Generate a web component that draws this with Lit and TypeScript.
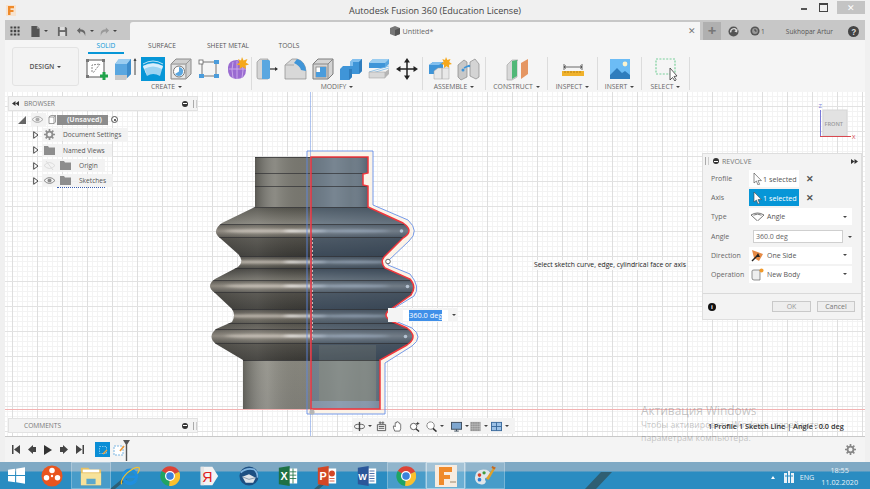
import { LitElement, html, css, svg } from "lit";
import { customElement } from "lit/decorators.js";

const ico = (body: unknown, size = 24) =>
  html`<svg width=${size} height=${size} viewBox="0 0 24 24">${body}</svg>`;

const caret = html`<span class="caret"></span>`;

// toolbar icons, all on a 24 box
const tb: Record<string, unknown> = {
  sketch: svg`<rect x="2" y="3" width="17" height="17" fill="#fff" stroke="#555" stroke-width="1"/>
    <path d="M7 15 L7 8 L15 7 L8 16" fill="none" stroke="#888" stroke-dasharray="2 1"/>
    <rect x="1" y="2" width="3" height="3" fill="#777"/><rect x="17" y="2" width="3" height="3" fill="#777"/><rect x="1" y="18" width="3" height="3" fill="#777"/>
    <path d="M15 19h8M19 15v8" stroke="#1fa34a" stroke-width="3"/>`,
  extrude: svg`<path d="M2 7 L6 2 L18 2 L18 17 L14 21 L2 21Z" fill="#5aa7e0"/>
    <path d="M2 7 L6 2 L18 2 L14 7Z" fill="#9bcdf0"/><path d="M14 7 L18 2 L18 17 L14 21Z" fill="#3d8ccb"/>
    <path d="M2 18h12v3l-1 2H2Z" fill="#c9c9c9"/><path d="M22 2v16" stroke="#444"/><path d="M20.5 4 L22 1 L23.5 4Z" fill="#444"/>`,
  revolve: svg`<rect width="24" height="24" fill="#0696d7"/>
    <path d="M2 9 Q12 3 22 9 L19 19 Q12 15 6 19Z" fill="#9bd3f2"/><path d="M2 9 Q12 4 22 9 L21 12 Q12 7 3 12Z" fill="#d9eefb"/>
    <path d="M2 9 L6 19 L5 15Z" fill="#eee"/><path d="M2 7 Q12 1 22 7" fill="none" stroke="#e6f5fd" stroke-width=".8"/>`,
  hole: svg`<path d="M2 7 L7 2 L22 2 L22 17 L17 22 L2 22Z" fill="#cfcfcf" stroke="#8c8c8c"/>
    <path d="M17 22V7L22 2M17 7H2" fill="none" stroke="#999"/><rect x="3" y="8" width="13" height="13" fill="#e6e6e6"/>
    <circle cx="10" cy="14.5" r="5.5" fill="#fff" stroke="#777"/><path d="M10 14.5V10A4.5 4.5 0 1 1 6 17Z" fill="#5aa7e0"/>`,
  box: svg`<path d="M5 5H19M5 5V19M19 5V19M5 19H19" stroke="#555" stroke-width=".8"/>
    <rect x="2" y="3" width="4" height="4" fill="#fff" stroke="#666" stroke-width=".8"/><rect x="17" y="3" width="5" height="4" fill="#4a9cdc"/>
    <rect x="2" y="17" width="5" height="4" fill="#4a9cdc"/><rect x="17" y="17" width="5" height="4" fill="#4a9cdc"/>`,
  form: svg`<path d="M3 10 Q4 3 12 3 Q21 4 21 13 Q21 22 11 22 Q2 21 3 10Z" fill="#9a6bd1"/>
    <path d="M4 12H21M12 4V22M8 5Q6 13 8 21M17 5Q19 13 17 21" fill="none" stroke="#c9a9ea" stroke-width="1"/>
    <path d="M17 0 L18.5 3.5 L22.5 2 L20.8 5.5 L24 7.5 L20.5 8.5 L21 12 L17.5 10 L14.5 12 L15 8.5 L11.5 7.5 L14.5 5.5 L13 2 L16 3.5Z" fill="#f5a81c"/>`,
  press: svg`<path d="M2 5 L5 2 H13 V22 H4 Q2 22 2 20Z" fill="#d5d5d5" stroke="#888" stroke-width=".6"/>
    <path d="M7 3 H14 L15 4 V21 L14 22 H7Z" fill="#5aa7e0"/><path d="M15 12H22" stroke="#333" stroke-width="1.2"/><path d="M20 10 L23 12 L20 14Z" fill="#333"/>`,
  fillet: svg`<path d="M2 22 V8 L9 2 H14 Q22 4 23 14 V22Z" fill="#d8d8d8" stroke="#8a8a8a" stroke-width=".7"/>
    <path d="M14 2 Q22 4 23 14 L18 13 Q17 9 11 6Z" fill="#3f95d8"/><path d="M2 8 H11" stroke="#aaa"/>`,
  shell: svg`<path d="M2 7 L7 2 H22 V17 L17 22 H2Z" fill="#d4d4d4" stroke="#7c7c7c"/>
    <path d="M17 22V7L22 2M17 7H2" fill="none" stroke="#888"/><rect x="5" y="10" width="10" height="10" fill="#fff" stroke="#777" stroke-width=".7"/>
    <path d="M9 10H15V20H5V15H9Z" fill="#4a9cdc"/>`,
  combine: svg`<path d="M1 12 L4 9 H11 V5 L14 2 H23 V14 L20 17 H13 V20 L10 23 H1Z" fill="#3f95d8"/>
    <path d="M11 9V5L14 2H23L20 5H14V9Z" fill="#82bfee"/><path d="M20 5V17L23 14V2Z" fill="#2f7dbd"/><path d="M10 23V12H13V20Z" fill="#2f7dbd"/>`,
  offset: svg`<path d="M2 6 L6 2 H22 V7 L18 11 H2Z" fill="#5aa7e0"/><path d="M2 6H18V11H2Z" fill="#3f95d8"/><path d="M2 6 L6 2 H22 L18 6Z" fill="#9bcdf0"/>
    <path d="M2 15 L22 9 M2 17 L22 11" stroke="#7fbbe8" stroke-width=".8"/><path d="M2 15H18V21L2 21Z" fill="#d8d8d8" stroke="#999" stroke-width=".5"/><path d="M18 15 L22 12 V17 L18 21Z" fill="#b5b5b5"/>`,
  move: svg`<path d="M12 3V21M3 12H21" stroke="#222" stroke-width="1.5"/><path d="M12 1 L15 5.5 H9Z M12 23 L15 18.5 H9Z M1 12 L5.5 9 V15Z M23 12 L18.5 9 V15Z" fill="#222"/>`,
  comp: svg`<path d="M1 8 L5 5 H15 V17 H1Z" fill="#3f95d8"/><path d="M1 8 L5 5 H15 L11 8Z" fill="#82bfee"/><path d="M6 14 L10 11 H21 V22 H6Z" fill="#e8e8e8" stroke="#a0a0a0" stroke-width=".5"/><path d="M14 11V22" stroke="#aaa"/>
    <path d="M18 0 L19.3 3 L22.5 2 L21.2 5 L24 7 L21 7.8 L21.3 11 L18.5 9.2 L16 11 L16 7.8 L13 7 L15.6 5 L14.3 2 L17 3Z" fill="#f5a81c"/>`,
  joint: svg`<path d="M2 8 L8 3 L11 5 V20 L5 23 L2 20Z" fill="#c8c8c8" stroke="#888" stroke-width=".7"/><path d="M14 5 L19 2 L23 7 V20 L20 22 L14 19Z" fill="#d4d4d4" stroke="#888" stroke-width=".7"/>
    <path d="M8 11 L12 9" stroke="#3f95d8" stroke-width="1.5"/><circle cx="7" cy="13" r="1.5" fill="#3f95d8"/><circle cx="13" cy="9" r="1.2" fill="#3f95d8"/>`,
  plane: svg`<path d="M2 8 L7 3 H13 L12 4 V20 L7 23 H2Z" fill="#d9d9d9" stroke="#9a9a9a" stroke-width=".6"/><path d="M7 4 L12 3 V19 L7 22Z" fill="#52b878"/>
    <path d="M16 6 L23 2 V17 L16 22Z" fill="#e59662"/>`,
  inspect: svg`<path d="M3 10H21" stroke="#444" stroke-width=".8"/><path d="M3 7V13M21 7V13" stroke="#444" stroke-width=".8"/><path d="M5 8.5L3 10L5 11.5M19 8.5L21 10L19 11.5" stroke="#444" stroke-width=".8" fill="none"/>
    <rect x="1" y="14" width="22" height="5" fill="#f0b22c"/><path d="M4 14v2M7 14v2M10 14v2M13 14v2M16 14v2M19 14v2" stroke="#a36c00" stroke-width=".7"/>`,
  insert: svg`<rect x="2" y="2" width="20" height="20" fill="#6cbcf5"/><circle cx="17" cy="7" r="2.4" fill="#fbf3cf"/>
    <path d="M2 18 L9 11 L14 16 L17 14 L22 18 V22 H2Z" fill="#2f7dbd"/>`,
  select: svg`<rect x="2" y="2" width="19" height="15" fill="none" stroke="#7bd09c" stroke-width="1.2" stroke-dasharray="2 1.4"/>
    <path d="M16 11 V23 L18.5 20.5 L21 24 L22 22.5 L20 19.5 L23 19Z" fill="#fff" stroke="#333" stroke-width=".8"/>`,
};

const tabs = [
  { label: "SOLID", w: 36, on: true },
  { label: "SURFACE", w: 76 },
  { label: "SHEET METAL", w: 56 },
  { label: "TOOLS", w: 66 },
];

const groups = [
  { label: "CREATE", w: 164, pad: true, icons: ["sketch", "extrude", "revolve", "hole", "box", "form"] },
  { label: "MODIFY", w: 171, icons: ["press", "fillet", "shell", "combine", "offset", "move"] },
  { label: "ASSEMBLE", w: 63, icons: ["comp", "joint"] },
  { label: "CONSTRUCT", w: 62, icons: ["plane"] },
  { label: "INSPECT", w: 50, icons: ["inspect"] },
  { label: "INSERT", w: 44, icons: ["insert"] },
  { label: "SELECT", w: 48, icons: ["select"] },
];

const eye = (c = "#8b8b8b") => html`<svg class="tree-ic" width="11" height="9" viewBox="0 0 11 9">
  <path d="M0 4.5 Q5.5 -1.5 11 4.5 Q5.5 10.5 0 4.5Z" fill="none" stroke=${c}/><circle cx="5.5" cy="4.5" r="2" fill=${c}/></svg>`;
const eyeOff = html`<svg class="tree-ic" width="11" height="9" viewBox="0 0 11 9">
  <path d="M0 4.5 Q5.5 -1.5 11 4.5 Q5.5 10.5 0 4.5Z" fill="none" stroke="#dcdcdc"/><path d="M2 0 L9 9" stroke="#dcdcdc"/></svg>`;
const folder = html`<svg class="tree-ic" width="11" height="9" viewBox="0 0 11 9"><path d="M0 0H4L5 1.5H11V9H0Z" fill="#8d8d8d"/></svg>`;
const gear = (size = 11, c = "#8d8d8d") => html`<svg class="tree-ic" width=${size} height=${size} viewBox="0 0 12 12">
  <circle cx="6" cy="6" r="3.2" fill="none" stroke=${c} stroke-width="2"/>
  <path d="M6 0V2.4M6 9.6V12M0 6H2.4M9.6 6H12M1.8 1.8L3.4 3.4M8.6 8.6L10.2 10.2M1.8 10.2L3.4 8.6M8.6 3.4L10.2 1.8" stroke=${c} stroke-width="1.8"/></svg>`;

const treeRows = [
  { label: "Document Settings", deep: false, icon: gear() },
  { label: "Named Views", deep: false, icon: folder },
  { label: "Origin", deep: true, eye: eyeOff, icon: folder },
  { label: "Sketches", deep: true, eye: eye(), icon: folder, warn: true },
];

const cursorIc = (c: string) => html`<svg width="9" height="12" viewBox="0 0 9 12"><path d="M1 0V10L3.4 8L5 12L6.6 11.3L5 7.6H8.4Z" fill=${c} stroke="#444" stroke-width=".6"/></svg>`;

const revolveRows = [
  { label: "Profile", value: "1 selected", kind: "sel", icon: cursorIc("#fff") },
  { label: "Axis", value: "1 selected", kind: "sel on", icon: cursorIc("#fff") },
  { label: "Type", value: "Angle", kind: "drop", icon: html`<svg width="13" height="9" viewBox="0 0 13 9"><path d="M0 3 Q6.5 -1 13 3 L6.5 9Z M2.5 3.2 Q6.5 1 10.5 3.2" fill="#fff" stroke="#555" stroke-width=".8"/></svg>` },
  { label: "Angle", value: "360.0 deg", kind: "num" },
  { label: "Direction", value: "One Side", kind: "drop", icon: html`<svg width="13" height="13" viewBox="0 0 13 13"><path d="M1 1 L12 5 L8 12 L3 9Z" fill="#e58a45"/><path d="M1 12 L7 6" stroke="#222" stroke-width="1.4"/><path d="M7 4 L9 8 L5 8Z" fill="#222"/></svg>` },
  { label: "Operation", value: "New Body", kind: "drop", icon: html`<svg width="13" height="13" viewBox="0 0 13 13"><path d="M1 3 Q1 2 3 2 H9 V12 H3 Q1 12 1 10Z" fill="#eee" stroke="#666" stroke-width=".7"/><circle cx="10.5" cy="2.5" r="2" fill="#f09a2c"/></svg>` },
];

const navItems = [
  { w: 22, c: svg`<ellipse cx="12" cy="12" rx="11" ry="5" fill="none" stroke="#444" stroke-width="1.8"/><path d="M12 2V22" stroke="#444" stroke-width="3"/>`, car: true },
  { w: 16, c: svg`<path d="M3 8H21V21H3ZM6 4H18M6 12H18M6 16H18" fill="none" stroke="#555" stroke-width="2"/><path d="M9 1V7M15 1V7" stroke="#555" stroke-width="2"/>` },
  { w: 17, c: svg`<path d="M6 22 Q2 14 3 11 Q5 9 7 13 V4 Q9 2 10 4 V2 Q12 0 13 2 V3 Q15 2 16 4 V6 Q19 5 19 8 V17 L17 22Z" fill="#fff" stroke="#555" stroke-width="1.7"/>` },
  { w: 17, c: svg`<circle cx="10" cy="12" r="7" fill="#fff" stroke="#555" stroke-width="2"/><path d="M15 17L22 23" stroke="#333" stroke-width="3"/><path d="M19 2V9M15.5 5.5H22.5" stroke="#333" stroke-width="1.8"/>` },
  { w: 25, c: svg`<circle cx="10" cy="10" r="8" fill="#fff" stroke="#555" stroke-width="2" stroke-dasharray="3 1"/><path d="M15 16L23 23" stroke="#333" stroke-width="3.5"/>`, car: true },
  { w: 19, c: svg`<rect x="1" y="3" width="22" height="15" fill="#7ea6cf" stroke="#3a4a5a" stroke-width="2"/><path d="M7 22H17M12 18V22" stroke="#3a4a5a" stroke-width="2"/>`, car: true },
  { w: 21, c: svg`<rect x="1" y="2" width="22" height="20" fill="#8d8d8d"/><path d="M5 2V22M9 2V22M13 2V22M17 2V22M21 2V22M1 7H23M1 12H23M1 17H23" stroke="#d5d5d5" stroke-width=".9"/>`, car: true },
  { w: 20, c: svg`<rect x="1" y="3" width="22" height="18" fill="#9cc1e6" stroke="#38689a" stroke-width="2"/><path d="M12 3V21M1 12H23" stroke="#38689a" stroke-width="2"/>`, car: true },
];

const chrome = html`<svg width="20" height="20" viewBox="0 0 24 24">
  <path d="M12 12 L2 6 A12 12 0 0 1 23 7Z" fill="#dc4437"/><path d="M12 12 L2 6 A12 12 0 0 0 11 24Z" fill="#1fa463"/><path d="M12 12 L23 7 A12 12 0 0 1 11 24Z" fill="#fbc02d"/>
  <circle cx="12" cy="12" r="6" fill="#fff"/><circle cx="12" cy="12" r="4.5" fill="#3b82dc"/></svg>`;

const taskItems = [
  html`<svg width="22" height="22" viewBox="0 0 24 24"><circle cx="12" cy="12" r="11.5" fill="#e9551f"/><circle cx="12" cy="6" r="3" fill="#fff"/><circle cx="6" cy="14" r="3" fill="#fff"/><circle cx="18" cy="14" r="3" fill="#fff"/><circle cx="12" cy="12" r="1.3" fill="#fff"/></svg>`,
  html`<svg width="22" height="22" viewBox="0 0 24 24"><path d="M1 3H9L11 5H23V22H1Z" fill="#e7c163"/><path d="M1 9H23V22H1Z" fill="#f7e29a"/><path d="M3 5H21V8H3Z" fill="#fff"/><rect x="7" y="15" width="10" height="6" fill="#5aa8cc"/></svg>`,
  html`<svg width="20" height="20" viewBox="0 0 24 24"><circle cx="12" cy="13" r="8" fill="none" stroke="#1f8fe0" stroke-width="4"/><path d="M5 13H19" stroke="#1f8fe0" stroke-width="3"/><path d="M21 14 L24 14 L15 21 L21 17Z" fill="#2b8dc0"/><path d="M2 22 Q0 17 9 8 Q19 0 23 2 Q24 5 21 9" fill="none" stroke="#f3c12d" stroke-width="1.4"/></svg>`,
  chrome,
  html`<svg width="20" height="20" viewBox="0 0 24 24"><path d="M2 1H16L23 12L16 23H2Z" fill="#f3f3f3"/><path d="M2 1H6V23H2Z" fill="#e6e6e6"/><text class="glyph" x="4" y="19" font-size="17" fill="#e0201b">Я</text></svg>`,
  html`<svg width="20" height="20" viewBox="0 0 24 24"><circle cx="12" cy="12" r="11.5" fill="#1d4f82"/><path d="M2 8 Q8 2 18 4 Q23 8 22 14" fill="none" stroke="#7fb4e0" stroke-width="2"/><path d="M4 13 L12 10 L20 14 L17 20 H8Z" fill="#dfe4ea"/><path d="M4 13 L12 16 L20 14" fill="none" stroke="#7b8ea2"/></svg>`,
  html`<svg width="20" height="20" viewBox="0 0 24 24"><path d="M13 3H23V21H13Z" fill="#fff"/><path d="M14 7H22M14 11H22M14 15H22M18 3V21" stroke="#1e7145" stroke-width="1"/><path d="M1 2 L14 0 V24 L1 22Z" fill="#1e7145"/><text class="glyph" x="3" y="17" font-size="13" fill="#fff" font-weight="700">X</text></svg>`,
  html`<svg width="20" height="20" viewBox="0 0 24 24"><path d="M13 3H23V21H13Z" fill="#fff"/><circle cx="18" cy="9" r="3.5" fill="#d24726"/><path d="M15 15H21M15 18H21" stroke="#d24726"/><path d="M1 2 L14 0 V24 L1 22Z" fill="#d24726"/><text class="glyph" x="3" y="17" font-size="13" fill="#fff" font-weight="700">P</text></svg>`,
  html`<svg width="20" height="20" viewBox="0 0 24 24"><path d="M13 3H23V21H13Z" fill="#fff"/><path d="M15 6H21M15 9H21M15 12H21M15 15H21M15 18H21" stroke="#2b579a"/><path d="M1 2 L14 0 V24 L1 22Z" fill="#2b579a"/><text class="glyph" x="1.5" y="16.5" font-size="11" fill="#fff" font-weight="700">W</text></svg>`,
  chrome,
  html`<svg width="24" height="24" viewBox="0 0 24 24"><rect x="1" y="1" width="22" height="22" fill="#f7ece0"/><path d="M5 3H18V8H10V11H16V15H10V21H5Z" fill="#ef8a2a"/><path d="M16 18H22" stroke="#c9b9a5" stroke-width="2"/></svg>`,
  html`<svg width="22" height="22" viewBox="0 0 24 24"><path d="M1 14 Q1 6 10 5 Q18 5 18 11 Q18 14 13 14 Q11 15 13 18 Q12 22 7 21 Q1 20 1 14Z" fill="#dfe6ea"/><circle cx="6" cy="11" r="2" fill="#d9432b"/><circle cx="11" cy="8.5" r="1.8" fill="#3f9a3d"/><circle cx="6" cy="16" r="2" fill="#2f7dd3"/><path d="M13 15 L21 3 L23 4 L16 16Z" fill="#e0a12a"/><path d="M20 1 L24 3 L22 5 L19 3Z" fill="#c46a22"/></svg>`,
];

@customElement("app-root")
export class AppRoot extends LitElement {
  static styles = css`
    :host {
      display: block;
      position: relative;
      width: 870px;
      height: 489px;
      overflow: hidden;
      background: #f0f0f0;
      font-family: "Open Sans", "Liberation Sans", sans-serif;
      color: #555;
    }
    svg { display: block; flex: none; }
    .glyph { font-family: "Liberation Sans", sans-serif; }

    /* window title */
    .title {
      height: 20px;
      display: grid;
      grid-template-columns: 1fr auto 1fr;
      align-items: center;
      font-size: 9.1px;
      color: #444;
    }
    .f-logo { margin-left: 6px; }
    .win-btns { display: flex; justify-content: flex-end; align-items: center; height: 13px; margin-top: -6px; padding-right: 5px; }
    .win-min { width: 6px; height: 2px; background: #555; margin-top: 4px; margin-right: 12px; }
    .win-max { width: 7px; height: 6px; border: 1px solid #444; border-top-width: 2px; margin-right: 9px; }
    .win-close { width: 28px; height: 13px; background: #c4c4c4; color: #fff; font-size: 9px; line-height: 13px; text-align: center; }

    /* document tabs */
    .tabbar { margin: 0 5px; height: 20px; background: #c7c7c7; display: flex; align-items: flex-end; }
    .quick { width: 125px; height: 18px; display: flex; align-items: center; padding-left: 5px; box-sizing: border-box; }
    .spc-doc { width: 10px; }
    .spc-save { width: 9px; }
    .spc-undo { width: 8px; }
    .spc-redo { width: 5px; }
    .doc-tab {
      flex: 1;
      height: 18px;
      background: #f5f5f5;
      border-radius: 3px 0 0 0;
      display: flex;
      align-items: center;
      justify-content: center;
      gap: 3px;
      padding-right: 7px;
      font-size: 7.2px;
      color: #666;
      position: relative;
    }
    .doc-x { position: absolute; right: 4px; top: 4px; font-size: 9px; line-height: 10px; color: #777; }
    .plus { width: 18px; height: 18px; margin-left: 3px; background: #b0b0b0; color: #777; font-size: 15px; font-weight: 700; line-height: 17px; text-align: center; }
    .acct { display: flex; align-items: center; height: 18px; flex: none; width: 144px; font-size: 6.6px; color: #555; }
    .acct .count { margin-left: 1px; margin-right: 21px; }
    .acct .who { width: 59px; }
    .spc-a { width: 7px; }
    .spc-b { width: 11px; }
    .spc-c { width: 3px; }
    .caret { display: inline-block; width: 0; height: 0; border: 2px solid transparent; border-top: 2.5px solid #444; border-bottom: 0; margin-left: 3px; vertical-align: middle; }
    .quick .caret { margin: 0 0 0 3px; flex: none; }

    /* ribbon */
    .ribbon { margin: 0 5px; height: 52px; background: #f5f5f5; display: flex; }
    .design {
      margin: 7px 9px 6px 7px;
      width: 67px;
      box-sizing: border-box;
      border: 1px solid #e3e3e3;
      border-radius: 3px;
      background: #f3f3f3;
      display: flex;
      align-items: center;
      justify-content: center;
      font-size: 6.8px;
      font-weight: 600;
      color: #555;
    }
    .ribbon-main { display: flex; flex-direction: column; }
    .tabs { display: flex; height: 14px; font-size: 6.6px; }
    .rtab { text-align: center; line-height: 12px; color: #555; box-sizing: border-box; height: 14px; }
    .rtab.on { color: #0696d7; border-bottom: 2px solid #0696d7; }
    .groups { display: flex; height: 38px; }
    .group { box-sizing: border-box; border-right: 1px solid #dcdcdc; display: flex; flex-direction: column; align-items: center; margin-top: 3px; height: 33px; }
    .group.pad { padding-right: 6px; }
    .group-icons { display: flex; gap: 4px; height: 24px; }
    .group-label { font-size: 6.8px; line-height: 10px; white-space: nowrap; margin-top: 1px; color: #666; }

    /* canvas */
    .canvas {
      margin: 0 5px;
      height: 344px;
      position: relative;
      overflow: hidden;
      background-color: #fff;
      background-image:
        linear-gradient(#e2e2e2 1px, transparent 1px),
        linear-gradient(90deg, #dedede 1px, transparent 1px),
        linear-gradient(#f3f3f3 1px, transparent 1px),
        linear-gradient(90deg, #f3f3f3 1px, transparent 1px);
      background-size: 25px 25px, 25px 25px, 5px 5px, 5px 5px;
      background-position: 0 14px, 7px 0, 0 4px, 2px 0;
      border-bottom: 1px solid #c9c9c9;
      box-sizing: content-box;
    }
    .scene { position: absolute; left: 0; top: 0; }

    .panel-bar {
      position: absolute;
      left: 3px;
      width: 190px;
      height: 15px;
      box-sizing: border-box;
      background: #f3f3f3;
      border: 1px solid #e2e2e2;
      display: flex;
      align-items: center;
      font-size: 6.6px;
      color: #777;
      padding: 0 0 0 3px;
    }
    .panel-bar.browser { top: 4px; }
    .panel-bar.comments { top: 326px; }
    .panel-bar .name { margin-left: 5px; flex: 1; }
    .panel-bar.comments .name { margin-left: 12px; }
    .dot-btn { width: 6px; height: 6px; border-radius: 50%; background: #333; margin-right: 5px; position: relative; }
    .dot-btn::after { content: ""; position: absolute; left: 1px; right: 1px; top: 2.5px; height: 1px; background: #fff; }
    .grip { width: 2px; height: 8px; border-left: 1px solid #aaa; border-right: 1px solid #ccc; }

    .tree { position: absolute; left: 13px; top: 20px; font-size: 6.6px; color: #555; }
    .tree-row { display: flex; align-items: center; height: 15.3px; }
    .tree-root .tri { margin-right: 5px; }
    .tree-root .chip-eye { padding: 2px 3px 2px 1px; background: #f2f2f2; }
    .unsaved {
      width: 62px;
      height: 10px;
      box-sizing: border-box;
      background: #8c8c8c;
      display: flex;
      align-items: center;
      color: #f2f2f2;
      font-weight: 700;
      font-size: 7px;
    }
    .unsaved-cube { width: 11px; height: 10px; background: #f6f6f6; margin-right: 10px; display: flex; align-items: center; justify-content: center; flex: none; }
    .radio { width: 7px; height: 7px; border: 1px solid #555; border-radius: 50%; margin-left: 3px; position: relative; box-sizing: border-box; }
    .radio::after { content: ""; position: absolute; left: 1.5px; top: 1.5px; width: 2px; height: 2px; background: #333; border-radius: 50%; }
    .tree-child { padding-left: 15px; }
    .chev { margin-right: 3px; }
    .chip { display: flex; align-items: center; background: rgba(241, 241, 241, 0.85); height: 13px; padding: 0 7px 0 2px; position: relative; }
    .chip .tree-lbl { margin-left: 8px; white-space: nowrap; }
    .chip .tree-ic + .tree-ic { margin-left: 5px; }
    .warn { position: absolute; left: 15px; right: 8px; bottom: -1px; height: 2px; border-bottom: 1px dotted #3b5fb0; }

    /* revolve dialog */
    .dialog {
      position: absolute;
      left: 697px;
      top: 61px;
      width: 160px;
      height: 167px;
      box-sizing: border-box;
      background: #f3f3f3;
      border: 1px solid #dedede;
      display: flex;
      flex-direction: column;
      font-size: 7px;
      color: #666;
    }
    .dlg-head { height: 14px; display: flex; align-items: center; padding: 0 3px 0 2px; font-size: 7px; color: #777; }
    .dlg-head .dot-btn { margin: 0 3px 0 4px; }
    .dlg-head .name { flex: 1; }
    .dlg-body { display: flex; flex-direction: column; gap: 2.2px; padding: 2px 6px 0 8px; }
    .dlg-row { display: flex; align-items: center; height: 17px; }
    .dlg-label { width: 38px; }
    .sel-btn { width: 50px; height: 17px; background: #fff; display: flex; align-items: center; padding-left: 4px; box-sizing: border-box; gap: 1px; color: #555; font-size: 7.2px; white-space: nowrap; }
    .sel-btn.on { background: #0696d7; color: #fff; }
    .x { margin-left: 7px; font-size: 9px; font-weight: 700; color: #555; }
    .drop { width: 103px; height: 17px; background: #fff; display: flex; align-items: center; padding: 0 5px 0 2px; box-sizing: border-box; gap: 3px; color: #555; }
    .drop .val { flex: 1; }
    .num { margin-left: 4px; width: 90px; height: 13px; background: #fff; border: 1px solid #cfcfcf; box-sizing: border-box; padding-left: 2px; line-height: 11px; }
    .num-car { margin-left: 2px; }
    .dlg-foot { margin-top: auto; height: 25px; border-top: 1px solid #d9d9d9; display: flex; align-items: center; padding: 0 6px 0 5px; }
    .info { width: 8px; height: 8px; border-radius: 50%; background: #111; color: #fff; font-size: 6px; line-height: 8px; text-align: center; font-weight: 700; margin-right: auto; }
    .btn { height: 11px; line-height: 10px; box-sizing: border-box; border: 1px solid #c9c9c9; background: #eee; text-align: center; font-size: 7px; color: #777; }
    .btn.ok { width: 39px; margin-right: 6px; color: #999; }
    .btn.cancel { width: 38px; }

    .tip { position: absolute; left: 528px; top: 168px; font-size: 6.8px; line-height: 10px; padding: 0 1px; background: #f8f8f8; color: #222; white-space: nowrap; }

    .dim { position: absolute; left: 383px; top: 216px; width: 70px; height: 14px; background: #f4f4f4; display: flex; align-items: center; padding-left: 15px; box-sizing: border-box; }
    .dim-input { width: 45px; height: 11px; background: #fff; padding-left: 6px; box-sizing: border-box; font-size: 7.4px; line-height: 11px; display: flex; }
    .dim-sel { background: #3f8fe8; color: #fff; }
    .dim .caret { margin-left: 4px; }

    .navbar { position: absolute; left: 348px; top: 326px; width: 162px; height: 16px; background: #f3f3f3; display: flex; align-items: center; padding-left: 1px; box-sizing: border-box; }
    .nav-it { display: flex; align-items: center; flex: none; }
    .nav-it .caret { margin-left: 3px; }

    .cube-txt { font-family: "Open Sans", sans-serif; font-size: 5.6px; font-weight: 600; fill: #9a9a9a; }
    .axis-txt { font-family: "Open Sans", sans-serif; font-size: 6px; }

    /* timeline */
    .timeline { margin: 0 5px; height: 25px; background: #f4f4f4; display: flex; align-items: center; padding-left: 7px; position: relative; }
    .tl-ctrl { display: flex; gap: 8px; align-items: center; margin-right: 11px; }
    .tl-item { width: 15px; height: 15px; background: #0a8ed6; display: flex; align-items: center; justify-content: center; }
    .tl-sketch { margin-left: 3px; }
    .tl-mark { margin-left: -2.5px; margin-top: 2px; }
    .tl-gear { margin-left: auto; margin-right: 9px; }

    /* windows taskbar */
    .taskbar { height: 27px; position: relative; display: flex; align-items: stretch; color: #fff; background: linear-gradient(#7fa9c4 0, #7fa9c4 9px, #2a8cc1 10px, #2a8cc1 100%); }
    .stripes { position: absolute; left: 0; top: 0; pointer-events: none; }
    .start { width: 32px; display: flex; align-items: center; justify-content: center; position: relative; }
    .tb-it { width: 39.4px; display: flex; align-items: center; justify-content: center; box-sizing: border-box; position: relative; }
    .tb-it.active { background: rgba(255, 255, 255, 0.14); border: 1px solid rgba(255, 255, 255, 0.25); }
    .tb-it.hot { background: rgba(255, 255, 255, 0.3); border: 1px solid rgba(255, 255, 255, 0.45); }
    .tray { margin-left: auto; display: flex; align-items: flex-end; padding-bottom: 1px; font-size: 7.2px; position: relative; color: #e9f3f9; }
    .tray .up { width: 0; height: 0; border: 2px solid transparent; border-bottom: 3px solid #fff; border-top: 0; margin: 0 9px 9px 0; }
    .tray .flag { margin-right: 6px; margin-bottom: 5px; }
    .tray .lang { margin-right: 7px; margin-bottom: 6px; }
    .clock { text-align: center; line-height: 12px; margin-right: 12px; }

    /* overlay text */
    .status { position: absolute; left: 708px; top: 421px; font-size: 7.3px; line-height: 11px; font-weight: 600; color: #333; white-space: nowrap; }
    .activate { position: absolute; left: 641px; top: 401px; color: rgba(120, 120, 120, 0.42); font-size: 8.7px; line-height: 13px; pointer-events: none; white-space: nowrap; font-family: "Open Sans", sans-serif; }
    .activate .big { font-size: 11.9px; line-height: 18px; }
  `;

  private scene() {
    const body = "M255,157 L368,157 L368,173 L363,174 L363,185 L368,186 L368,207 L403,223 Q415,231 403,238 L384,257 Q380,262 385,268 L410,279 Q417,287 411,295 L391,309 Q381,315 391,321 L407,328 Q419,337 407,345 L380,360 L380,409 L243,409 L243,360 L216,344 Q207,337 216,329 L232,322 Q236,315 232,309 L215,293 Q205,286 215,279 L238,267 Q245,261 238,254 L220,238 Q211,231 222,223 L255,207 Z";
    const profile = "M311,157 L368,157 L368,173 L363,174 L363,185 L368,186 L368,207 L403,223 Q415,231 403,238 L384,257 Q380,262 385,268 L410,279 Q417,287 411,295 L391,309 Q381,315 391,321 L407,328 Q419,337 407,345 L380,360 L380,409 L311,409 Z";
    const blue = "M307,151 L373,151 L373,205 L408,220 Q420,231 409,241 L388,261 L388,265 L410,274 Q421,287 414,296 L393,309 L393,320 L412,328 Q424,337 412,346 L385,363 L385,414 L307,414 Z";
    const lines = [157, 173, 186, 207, 224, 237, 256, 268, 280, 292, 309, 323, 329, 343, 360, 409];
    const glints = [231, 262, 286, 316, 336];
    return svg`
      <defs>
        <linearGradient id="depth" gradientUnits="userSpaceOnUse" x1="0" y1="157" x2="0" y2="409">
          ${[
            [157, "#7b7a72"], [207, "#7b7a72"], [208, "#54534c"], [224, "#85837b"], [225, "#66635b"], [231, "#989288"], [237, "#5f5c55"],
            [238, "#504e48"], [256, "#383733"], [257, "#4e4c47"], [262, "#7a756b"], [268, "#474641"], [269, "#403f3b"], [280, "#74726a"],
            [281, "#625f58"], [286, "#989288"], [292, "#5c5a54"], [293, "#4f4d47"], [309, "#3a3935"], [310, "#4e4c47"], [316, "#7a756b"],
            [323, "#53514a"], [329, "#625f58"], [336, "#989288"], [343, "#585650"], [344, "#4f4d47"], [360, "#3a3935"], [361, "#8a8980"], [409, "#82817a"],
          ].map(([y, c]) => svg`<stop offset=${((y as number) - 157) / 252} stop-color=${c}/>`)}
        </linearGradient>
        <linearGradient id="neck" x1="0" x2="1" y1="0" y2="0">
          <stop offset="0" stop-color="#000" stop-opacity=".28"/><stop offset=".18" stop-color="#fff" stop-opacity=".13"/><stop offset=".42" stop-color="#000" stop-opacity=".03"/>
          <stop offset=".7" stop-color="#fff" stop-opacity=".14"/><stop offset=".85" stop-color="#fff" stop-opacity=".02"/><stop offset="1" stop-color="#000" stop-opacity=".28"/>
        </linearGradient>
        <linearGradient id="belly" x1="0" x2="1" y1="0" y2="0">
          <stop offset="0" stop-color="#000" stop-opacity=".12"/><stop offset=".25" stop-color="#fff" stop-opacity=".08"/><stop offset=".5" stop-color="#000" stop-opacity="0"/><stop offset="1" stop-color="#000" stop-opacity=".18"/>
        </linearGradient>
        <filter id="soft" x="-20%" y="-100%" width="140%" height="300%"><feGaussianBlur stdDeviation="2 .8"/></filter>
        <clipPath id="bodyClip"><path d=${body}/></clipPath>
      </defs>

      <path d=${blue} fill="#fbf3e8"/>
      <g clip-path="url(#bodyClip)">
        <rect x="200" y="150" width="230" height="265" fill="url(#depth)"/>
        <rect x="200" y="207" width="230" height="153" fill="url(#belly)"/>
        <rect x="255" y="157" width="113" height="50" fill="url(#neck)"/>
        <rect x="243" y="360" width="137" height="49" fill="url(#neck)"/>
        ${glints.map((y) => svg`
          <ellipse cx="262" cy=${y} rx="38" ry="1.6" fill="#e6dfd6" opacity=".55" filter="url(#soft)"/>
          <ellipse cx="305" cy=${y} rx="22" ry="1.3" fill="#fff" opacity=".75" filter="url(#soft)"/>
          <ellipse cx="355" cy=${y} rx="35" ry="1.4" fill="#d8e0ea" opacity=".5" filter="url(#soft)"/>`)}
        <rect x="311" y="150" width="120" height="265" fill="#4a78b0" opacity=".3"/>
        <rect x="319" y="345" width="57" height="15" fill="#8e8d7c" opacity=".22"/>
        <rect x="319" y="360" width="57" height="41" fill="#8e8d7c" opacity=".5"/>
        <rect x="311" y="401" width="69" height="8" fill="#a8bcd6" opacity=".4"/>
        ${lines.map((y) => svg`<line x1="200" x2="430" y1=${y + 0.5} y2=${y + 0.5} stroke="#2c2d30" stroke-width=".9" opacity=".75"/>`)}
      </g>

      <line x1="5" x2="865" y1="409.5" y2="409.5" stroke="#f3b3b3"/>
      <line x1="310.5" x2="310.5" y1="92" y2="436" stroke="#7d9fe8" opacity=".6"/>
      <path d=${blue} fill="none" stroke="#5d8ae8" stroke-width="1" opacity=".85"/>
      <path d=${profile} fill="none" stroke="#f0363c" stroke-width="1.5"/>
      <line x1="312.5" x2="312.5" y1="238" y2="340" stroke="#c9bcbc" stroke-width="1" stroke-dasharray="2 2"/>
      <circle cx="401.5" cy="231" r="1.8" fill="#b6c3d2"/><circle cx="407.5" cy="286.5" r="1.8" fill="#b6c3d2"/><circle cx="405.5" cy="336.5" r="1.8" fill="#b6c3d2"/>
      <circle cx="388" cy="261.5" r="2.3" fill="#fff" stroke="#555" stroke-width=".9"/>
      <circle cx="312" cy="412" r="2.6" fill="#b5b5b5"/>

      <rect x="823" y="110" width="24" height="26" fill="#e2e2e2" stroke="#d6d6d6"/>
      <path d="M820.5 137V110" stroke="#7a7ad8" stroke-width="1"/><path d="M820 136.5H851" stroke="#d9484f" stroke-width="1"/>
      <text class="cube-txt" x="824.5" y="125.5">FRONT</text>
      <text class="axis-txt" x="818.5" y="108" fill="#7a7ad8">Z</text><text class="axis-txt" x="852" y="139" fill="#d9484f">X</text>`;
  }

  render() {
    return html`
      <div class="title">
        <svg class="f-logo" width="10" height="11" viewBox="0 0 10 11"><rect width="10" height="11" fill="#f7e3cf"/><path d="M2 1H8V3.2H4.5V5H7.5V7H4.5V10H2Z" fill="#ef8a2a"/></svg>
        <span>Autodesk Fusion 360 (Education License)</span>
        <div class="win-btns"><span class="win-min"></span><span class="win-max"></span><span class="win-close">✕</span></div>
      </div>

      <div class="tabbar">
        <div class="quick">
          ${ico(svg`<path d="M1 1H6V6H1ZM9 1H15V6H9ZM18 1H23V6H18ZM1 9H6V15H1ZM9 9H15V15H9ZM18 9H23V15H18ZM1 18H6V23H1ZM9 18H15V23H9ZM18 18H23V23H18Z" fill="#444"/>`, 10)}
          <span class="spc-doc"></span>
          ${ico(svg`<path d="M3 0H15L21 6V24H3Z" fill="#555"/><path d="M15 0V6H21Z" fill="#999"/>`, 11)}${caret}
          <span class="spc-save"></span>
          ${ico(svg`<path d="M2 2H19L22 5V22H2Z" fill="#666"/><rect x="6" y="2" width="11" height="7" fill="#ddd"/><rect x="6" y="13" width="12" height="9" fill="#ddd"/>`, 11)}
          <span class="spc-undo"></span>
          ${ico(svg`<path d="M9 3L2 10L9 17V12Q18 12 20 22Q23 7 9 7Z" fill="#666"/>`, 11)}${caret}
          <span class="spc-redo"></span>
          ${ico(svg`<path d="M15 3L22 10L15 17V12Q6 12 4 22Q1 7 15 7Z" fill="#999"/>`, 11)}${caret}
        </div>
        <div class="doc-tab">
          <svg width="10" height="10" viewBox="0 0 10 10"><path d="M0 2L5 0L10 2V8L5 10L0 8Z" fill="#777"/><path d="M5 4V10L10 8V2Z" fill="#555"/></svg>
          <span>Untitled*</span>
          <span class="doc-x">✕</span>
        </div>
        <div class="plus">+</div>
        <div class="acct">
          <span class="spc-a"></span>
          ${ico(svg`<circle cx="12" cy="12" r="11" fill="#555"/><path d="M6 14A7 7 0 0 1 18 8" fill="none" stroke="#ddd" stroke-width="3"/><path d="M14 12L21 5L20 14Z" fill="#ddd"/>`, 11)}
          <span class="spc-b"></span>
          ${ico(svg`<circle cx="12" cy="12" r="11" fill="#555"/><circle cx="12" cy="12" r="7" fill="#999"/><path d="M12 7V12H16" fill="none" stroke="#333" stroke-width="2"/>`, 10)}
          <span class="count">1</span>
          <span class="who">Sukhopar Artur</span>
          <span class="spc-c"></span>
          <svg width="11" height="11" viewBox="0 0 24 24"><circle cx="12" cy="12" r="12" fill="#444"/><text class="glyph" x="7" y="19" font-size="18" font-weight="700" fill="#ddd">?</text></svg>
        </div>
      </div>

      <div class="ribbon">
        <div class="design">DESIGN${caret}</div>
        <div class="ribbon-main">
          <div class="tabs">
            ${tabs.map((t) => html`<div class="rtab ${t.on ? "on" : ""}" style="width:${t.w}px">${t.label}</div>`)}
          </div>
          <div class="groups">
            ${groups.map(
              (g) => html`<div class="group ${g.pad ? "pad" : ""}" style="width:${g.w}px">
                <div class="group-icons">${g.icons.map((i) => ico(tb[i]))}</div>
                <div class="group-label">${g.label}${caret}</div>
              </div>`
            )}
          </div>
        </div>
      </div>

      <div class="canvas">
        <svg class="scene" width="860" height="344" viewBox="5 92 860 344">${this.scene()}</svg>

        <div class="panel-bar browser">
          <svg width="7" height="5" viewBox="0 0 7 5"><path d="M3.5 0V5L0 2.5ZM7 0V5L3.5 2.5Z" fill="#333"/></svg>
          <span class="name">BROWSER</span><span class="dot-btn"></span><span class="grip"></span>
        </div>
        <div class="tree">
          <div class="tree-row tree-root">
            <svg class="tri" width="8" height="8" viewBox="0 0 8 8"><path d="M8 0V8H0Z" fill="#666"/></svg>
            <span class="chip-eye">${eye("#aaa")}</span>
            <span class="unsaved"><span class="unsaved-cube"><svg width="8" height="9" viewBox="0 0 8 9"><path d="M1 2L3 0.5H7.5V7L6 8.5H1Z" fill="#fff" stroke="#777" stroke-width=".7"/><path d="M6 8.5V2H1M6 2L7.5 .5" fill="none" stroke="#777" stroke-width=".7"/></svg></span>(Unsaved)</span>
            <span class="radio"></span>
          </div>
          ${treeRows.map(
            (r) => html`<div class="tree-row tree-child">
              <svg class="chev" width="6" height="8" viewBox="0 0 6 8"><path d="M.7 .7L5 4L.7 7.3Z" fill="#fff" stroke="#444" stroke-width="1"/></svg>
              <div class="chip">
                ${r.eye ?? ""}${r.icon}
                <span class="tree-lbl">${r.label}</span>
                ${r.warn ? html`<span class="warn"></span>` : ""}
              </div>
            </div>`
          )}
        </div>

        <div class="panel-bar comments">
          <span class="name">COMMENTS</span><span class="dot-btn"></span><span class="grip"></span>
        </div>

        <div class="dim">
          <div class="dim-input"><span class="dim-sel">360.0 deg</span></div>${caret}
        </div>

        <div class="tip">Select sketch curve, edge, cylindrical face or axis</div>

        <div class="dialog">
          <div class="dlg-head">
            <span class="grip"></span><span class="dot-btn"></span><span class="name">REVOLVE</span>
            <svg width="7" height="5" viewBox="0 0 7 5"><path d="M0 0V5L3.5 2.5ZM3.5 0V5L7 2.5Z" fill="#333"/></svg>
          </div>
          <div class="dlg-body">
            ${revolveRows.map(
              (r) => html`<div class="dlg-row">
                <span class="dlg-label">${r.label}</span>
                ${r.kind.startsWith("sel")
                  ? html`<div class="sel-btn ${r.kind === "sel on" ? "on" : ""}">${r.icon}<span>${r.value}</span></div><span class="x">✕</span>`
                  : r.kind === "drop"
                  ? html`<div class="drop">${r.icon}<span class="val">${r.value}</span>${caret}</div>`
                  : html`<div class="num">${r.value}</div><span class="num-car">${caret}</span>`}
              </div>`
            )}
          </div>
          <div class="dlg-foot">
            <span class="info">i</span>
            <span class="btn ok">OK</span><span class="btn cancel">Cancel</span>
          </div>
        </div>

        <div class="navbar">
          ${navItems.map((n) => html`<span class="nav-it" style="width:${n.w}px">${ico(n.c, 11)}${n.car ? caret : ""}</span>`)}
        </div>
      </div>

      <div class="timeline">
        <div class="tl-ctrl">
          <svg width="8" height="9" viewBox="0 0 8 9"><path d="M0 0H1.5V9H0ZM8 0V9L2 4.5Z" fill="#444"/></svg>
          <svg width="8" height="9" viewBox="0 0 8 9"><path d="M5 0V9L0 4.5ZM5 2H8V7H5Z" fill="#444"/></svg>
          <svg width="8" height="10" viewBox="0 0 8 10"><path d="M0 0V10L8 5Z" fill="#333"/></svg>
          <svg width="8" height="9" viewBox="0 0 8 9"><path d="M3 0V9L8 4.5ZM0 2H3V7H0Z" fill="#444"/></svg>
          <svg width="8" height="9" viewBox="0 0 8 9"><path d="M8 0H6.5V9H8ZM0 0V9L6 4.5Z" fill="#444"/></svg>
        </div>
        <span class="tl-item"><svg width="10" height="10" viewBox="0 0 10 10"><rect x="1.5" y="1.5" width="7" height="7" fill="none" stroke="#7cc4ee" stroke-dasharray="1.5 1"/><path d="M5 9L9 5" stroke="#f0a43c" stroke-width="1.5"/></svg></span>
        <svg class="tl-sketch" width="12" height="12" viewBox="0 0 12 12"><rect x="1" y="2" width="9" height="9" fill="#fff" stroke="#7cb6e2" stroke-dasharray="2 1"/><path d="M7 7L11 2" stroke="#ee9a3a" stroke-width="1.6"/></svg>
        <svg class="tl-mark" width="7" height="21" viewBox="0 0 7 21"><path d="M0 0H7L4.2 4.5V21H2.8V4.5Z" fill="#555"/></svg>
        <span class="tl-gear">${gear(11, "#888")}</span>
      </div>

      <div class="taskbar">
        <svg class="stripes" width="870" height="27" viewBox="0 0 870 27"><path d="M110 27L122 17H127L115 27ZM314 27L326 17H331L319 27ZM585 27L601 10H612L596 27Z" fill="#2f5f73"/></svg>
        <div class="start"><svg width="17" height="17" viewBox="0 0 24 24"><path d="M0 4L10 2.6V11.4H0ZM11.5 2.4L24 .5V11.4H11.5ZM0 12.8H10V21.5L0 20ZM11.5 12.8H24V23.5L11.5 21.7Z" fill="#fff"/></svg></div>
        ${taskItems.map(
          (t, i) => html`<div class="tb-it ${i === 1 || i === 9 || i === 11 ? "active" : i === 10 ? "hot" : ""}">${t}</div>`
        )}
        <div class="tray">
          <span class="up"></span>
          <svg class="flag" width="10" height="12" viewBox="0 0 10 12"><path d="M0 2H3V12H0ZM4 0H6V12H4ZM7 2H10V12H7Z" fill="#eaf2f7"/><path d="M1 5H9" stroke="#2a8cc1"/></svg>
          <span class="lang">ENG</span>
          <span class="clock">18:55<br />11.02.2020</span>
        </div>
      </div>

      <div class="activate"><div class="big">Активация Windows</div><div>Чтобы активировать Windows, перейдите к</div><div>параметрам компьютера.</div></div>
      <div class="status">1 Profile 1 Sketch Line | Angle : 0.0 deg</div>
    `;
  }
}
